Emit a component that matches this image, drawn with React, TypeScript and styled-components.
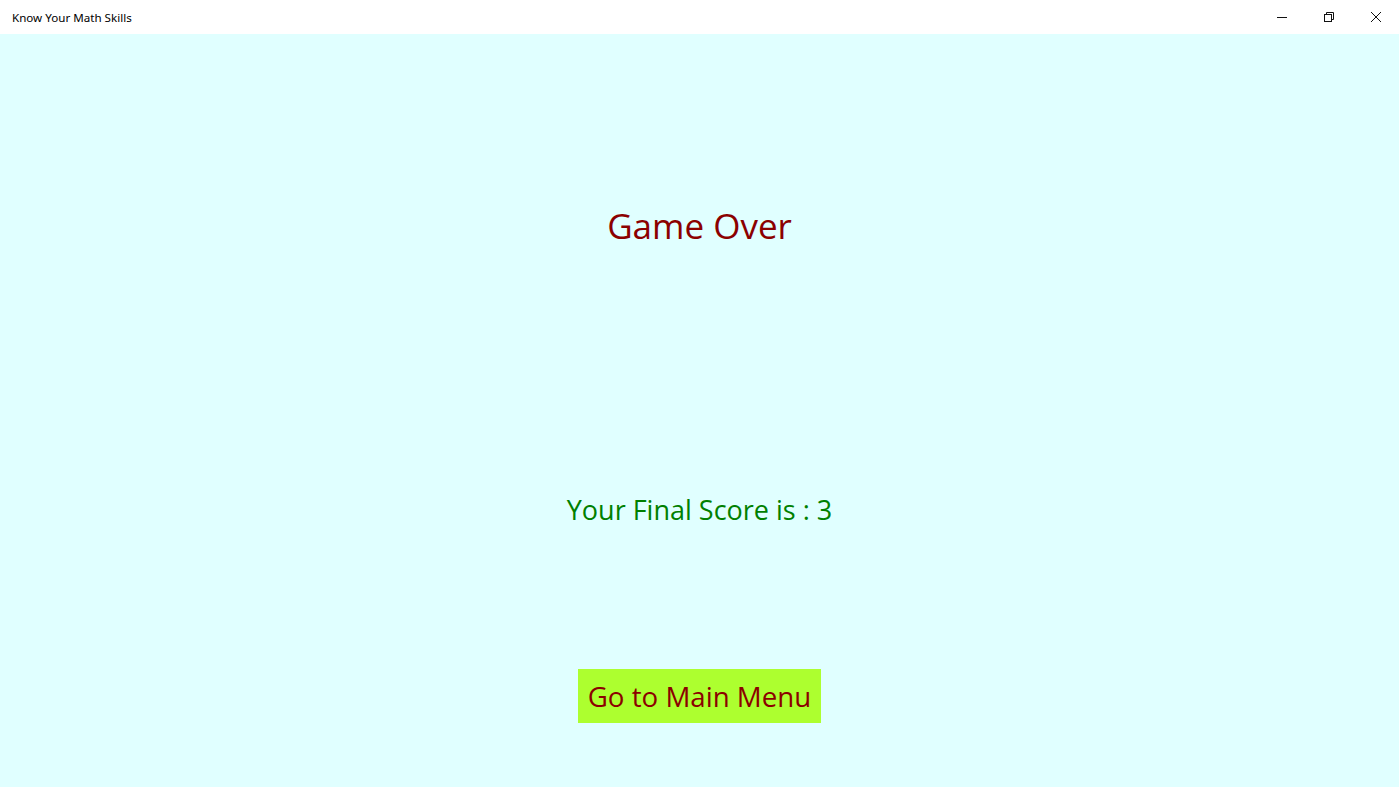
import React from "react";
import styled, { createGlobalStyle } from "styled-components";

const GlobalStyle = createGlobalStyle`
  html, body {
    margin: 0;
    padding: 0;
    height: 100%;
    overflow: hidden;
  }
  #root {
    height: 100%;
  }
  body {
    font-family: "Open Sans", "Noto Sans", "Liberation Sans", sans-serif;
  }
`;

function App() {
  return (
    <>
      <GlobalStyle />
      <Window>
        <TitleBar>
          <WindowTitle>Know Your Math Skills</WindowTitle>
          <Controls>
            <ControlButton aria-label="Minimize">
              <svg width="12" height="12" viewBox="0 0 12 12">
                <path d="M1 6.5h10" stroke="#111" strokeWidth="1" />
              </svg>
            </ControlButton>
            <ControlButton aria-label="Restore">
              <svg width="12" height="12" viewBox="0 0 12 12" fill="none">
                <rect x="1.5" y="3.5" width="7" height="7" stroke="#111" />
                <path d="M3.5 3.5V1.5h7v7h-2" stroke="#111" />
              </svg>
            </ControlButton>
            <ControlButton aria-label="Close">
              <svg width="12" height="12" viewBox="0 0 12 12">
                <path d="M1 1l10 10M11 1L1 11" stroke="#111" strokeWidth="1" />
              </svg>
            </ControlButton>
          </Controls>
        </TitleBar>
        <Content>
          <Heading>Game Over</Heading>
          <Score>Your Final Score is : 3</Score>
          <MenuButton>Go to Main Menu</MenuButton>
        </Content>
      </Window>
    </>
  );
}

const Window = styled.div`
  display: flex;
  flex-direction: column;
  height: 100%;
  background-color: #e0ffff;
`;

const TitleBar = styled.div`
  display: flex;
  align-items: center;
  justify-content: space-between;
  height: 34px;
  background-color: #fff;
  flex-shrink: 0;
`;

const WindowTitle = styled.div`
  padding-left: 12px;
  font-family: "Noto Sans", "Open Sans", sans-serif;
  font-size: 11.6px;
  color: #000;
`;

const Controls = styled.div`
  display: flex;
  height: 100%;
`;

const ControlButton = styled.div`
  display: flex;
  align-items: center;
  justify-content: center;
  width: 47px;
  height: 100%;
`;

const Content = styled.div`
  display: flex;
  flex-direction: column;
  align-items: center;
  flex: 1;
  padding-top: 165px;
`;

const Heading = styled.div`
  font-size: 35px;
  line-height: 54px;
  color: #8b0000;
`;

const Score = styled.div`
  margin-top: 237px;
  font-size: 27px;
  line-height: 40px;
  color: #008000;
`;

const MenuButton = styled.button`
  margin-top: 139px;
  height: 54px;
  padding: 0 10px;
  border: none;
  background-color: #adff2f;
  color: #8b0000;
  font-family: inherit;
  font-size: 27.7px;
  cursor: pointer;
`;

export default App;
